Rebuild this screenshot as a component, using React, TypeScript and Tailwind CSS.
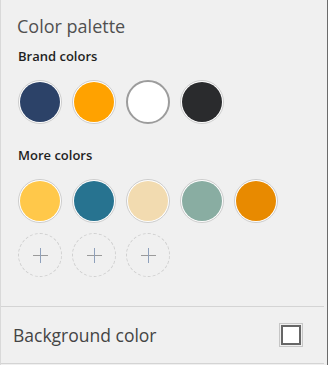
import React, { ReactElement } from "react";

const brandColors: string[] = ["#2c4268", "#ffa200", "#ffffff", "#2a2b2d"];
const moreColors: string[] = ["#ffc84a", "#277390", "#f2dbb0", "#89ada2", "#e88a00"];

function Swatch({ color }: { color: string }): ReactElement {
  const isWhite = color === "#ffffff";
  return (
    <button
      className={
        isWhite
          ? "w-[44px] h-[44px] rounded-full border-2 border-[#9c9c9c] bg-white"
          : "w-[44px] h-[44px] rounded-full border border-[#cdcdcd] bg-white p-[1px]"
      }
    >
      {!isWhite && (
        <div
          className="w-full h-full rounded-full"
          style={{ backgroundColor: color }}
        />
      )}
    </button>
  );
}

function AddSwatch(): ReactElement {
  return (
    <button className="w-[44px] h-[44px] rounded-full border border-dashed border-[#cfcfcf] flex items-center justify-center">
      <svg width="15" height="15" viewBox="0 0 15 15">
        <line x1="0" y1="7.5" x2="15" y2="7.5" stroke="#9a9a9a" strokeWidth="1" />
        <line x1="7.5" y1="0" x2="7.5" y2="15" stroke="#8ea0bb" strokeWidth="1" />
      </svg>
    </button>
  );
}

function App(): ReactElement {
  return (
    <div className="w-[328px] h-[365px] bg-[#f0f0f0] border-l border-l-[#d9d9d9] border-r border-r-[#6b6b6b] flex flex-col font-['Open_Sans',sans-serif]">
      <div className="h-[307px] mr-[3px] border-b border-[#d4d4d4] pl-[17px] pt-[14px] flex flex-col">
        <h2 className="text-[18px] leading-[24px] text-[#505050] -ml-[1px]">
          Color palette
        </h2>
        <p className="mt-[8px] text-[13px] leading-[20px] font-semibold text-[#1f1f1f]">
          Brand colors
        </p>
        <div className="mt-[14px] flex gap-[10px]">
          {brandColors.map((c) => (
            <Swatch key={c} color={c} />
          ))}
        </div>
        <p className="mt-[21px] text-[13px] leading-[20px] font-semibold text-[#1f1f1f]">
          More colors
        </p>
        <div className="mt-[14px] flex gap-[10px]">
          {moreColors.map((c) => (
            <Swatch key={c} color={c} />
          ))}
        </div>
        <div className="mt-[10px] flex gap-[10px]">
          <AddSwatch />
          <AddSwatch />
          <AddSwatch />
        </div>
      </div>
      <div className="h-[57px] mr-[3px] border-b border-[#d4d4d4] pl-[12px] pr-[21px] flex items-center justify-between">
        <span className="text-[17.5px] text-[#444444]">Background color</span>
        <div className="w-[24px] h-[24px] border border-[#c6c6c6] p-[1px]">
          <div className="w-full h-full border-2 border-[#666666] bg-white" />
        </div>
      </div>
    </div>
  );
}

export default App;
